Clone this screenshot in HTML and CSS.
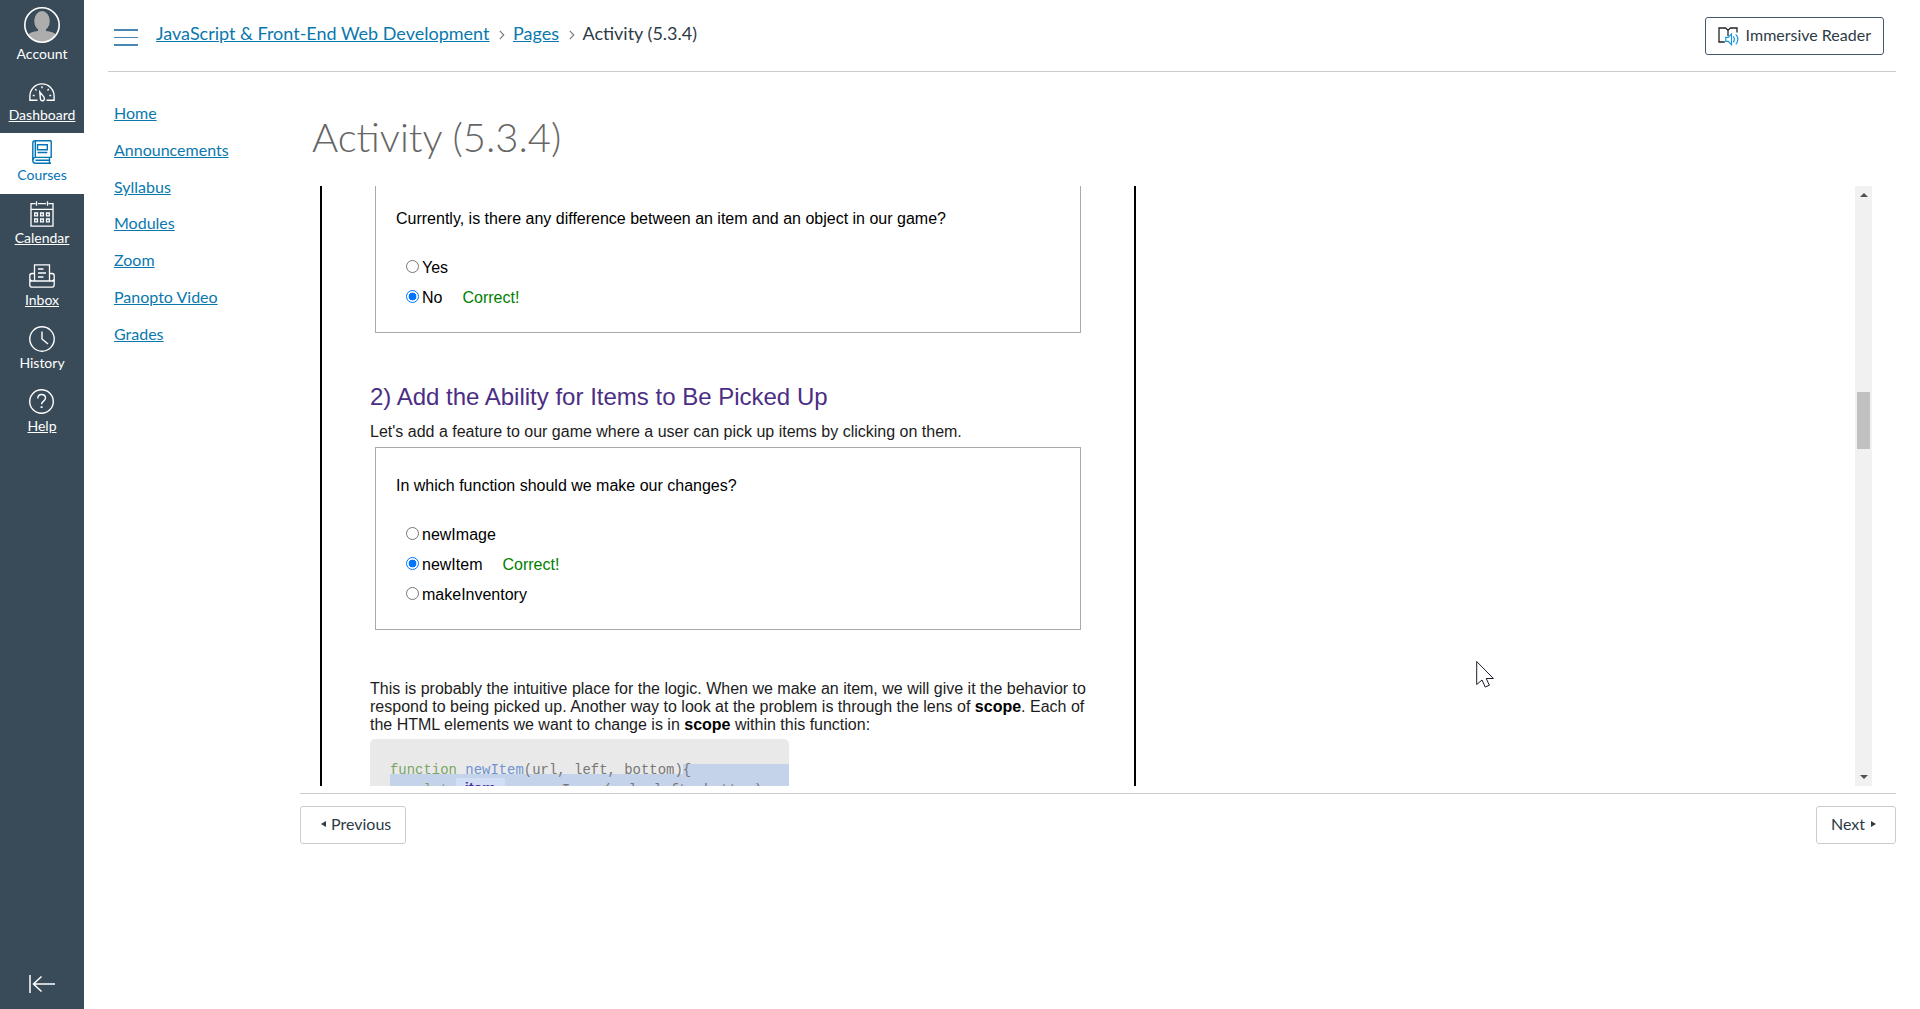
FILE: index.html
```html
<!DOCTYPE html>
<html lang="en">
<head>
<meta charset="utf-8">
<title>Activity (5.3.4)</title>
<link rel="stylesheet" href="styles.css">
</head>
<body>
<div class="app">
  <nav class="rail">
    <a class="rail-item account">
      <span class="rail-icon"><svg width="36" height="36" viewBox="0 0 36 36"><defs><clipPath id="face"><circle cx="18" cy="18" r="17"/></clipPath></defs><circle cx="18" cy="18" r="17" fill="#394b58"/><g clip-path="url(#face)" fill="#adadad"><ellipse cx="18" cy="14" rx="7.8" ry="10"/><path d="M14 20h8v4c5 .6 9 2 12 5v8H2v-8c3-3 7-4.400 12-5z"/></g><circle cx="18" cy="18" r="17.200" fill="none" stroke="#fff" stroke-width="1.600"/></svg></span>
      <span class="rail-label plain">Account</span>
    </a>
    <a class="rail-item dashboard">
      <span class="rail-icon"><svg width="26" height="19" viewBox="0 0 26 19" fill="none" stroke="#fff" stroke-width="1.400"><path d="M8.500 17.300H.9V13a12.100 12.100 0 0 1 24.200 0v4.300h-7.600"/><path d="M10.800 9l3.800 4.600c1.300 1.700.9 3.700-.6 4.100-1.700.4-2.600-.8-2.700-2.500z"/><path d="M13 3.300v2M6.200 6l1.300 1.400M19.800 6l-1.300 1.400M3.800 12.500h1.800M20.400 12.500h1.800"/></svg></span>
      <span class="rail-label">Dashboard</span>
    </a>
    <a class="rail-item courses">
      <span class="rail-icon"><svg width="20" height="24" viewBox="0 0 20 24" fill="none" stroke="#0374b5" stroke-width="1.400"><path d="M19.200.8H3.300C1.800.8.800 1.800.800 3.200v17.300c0 1.700 1 2.700 2.600 2.700H19"/><path d="M3.300.8v16.400M19.200.8v16.600H3.400c-1.600 0-2.500.9-2.500 2.500M17.500 17.500v5.500M3.500 20.200h14"/><path d="M5.500 4.700h9.800v5H5.500zM5.500 12.500h9.800"/></svg></span>
      <span class="rail-label plain">Courses</span>
    </a>
    <a class="rail-item calendar">
      <span class="rail-icon"><svg width="24" height="26" viewBox="0 0 24 26" fill="none" stroke="#fff" stroke-width="1.300"><path d="M5.500 2.700H1v22.500h22V2.700h-4.500M8 2.700h8M1 8.300h22M6.500.3v4.500M17.500.3v4.500"/><path d="M4.700 12h2.800v2.800H4.700zM10.600 12h2.800v2.800h-2.800zM16.500 12h2.800v2.800h-2.800zM4.700 18h2.800v2.800H4.700zM10.600 18h2.800v2.800h-2.800zM16.500 18h2.800v2.800h-2.800z"/></svg></span>
      <span class="rail-label">Calendar</span>
    </a>
    <a class="rail-item inbox">
      <span class="rail-icon"><svg width="26" height="24" viewBox="0 0 26 24" fill="none" stroke="#fff" stroke-width="1.300"><path d="M5.500 16.500V.8h15v15.700M5.500 9.500H3c-1.500 0-2.200.8-2.200 2.200v9c0 1.700.8 2.500 2.400 2.500h19.600c1.600 0 2.400-.8 2.400-2.500v-9c0-1.400-.7-2.200-2.200-2.200h-2.500M.8 15c.3 1.500 1 2 2.500 2h19.400c1.500 0 2.200-.5 2.500-2"/><path d="M9 5h5.500M9 9h8M9 13h5.500"/></svg></span>
      <span class="rail-label">Inbox</span>
    </a>
    <a class="rail-item history">
      <span class="rail-icon"><svg width="26" height="26" viewBox="0 0 26 26" fill="none" stroke="#fff" stroke-width="1.400"><circle cx="13" cy="13" r="12.200"/><path d="M13 5.500V13l6 5"/></svg></span>
      <span class="rail-label plain">History</span>
    </a>
    <a class="rail-item help">
      <span class="rail-icon"><svg width="26" height="26" viewBox="0 0 26 26" fill="none" stroke="#fff" stroke-width="1.400"><circle cx="12.500" cy="12.500" r="11.800"/><path d="M8.800 9.500c0-2.500 1.600-4 3.800-4s3.900 1.400 3.900 3.600c0 3-3.900 3-3.900 6.200"/><path d="M12.600 17.300v1.700" stroke-width="2"/></svg></span>
      <span class="rail-label">Help</span>
    </a>
    <a class="collapse"><svg width="26" height="18" viewBox="0 0 26 18" fill="none" stroke="#fff" stroke-width="1.500"><path d="M1 0v18M26 9H4.500M12.500 1.500L4.500 9l8 7.500"/></svg></a>
  </nav>

  <div class="page">
    <header class="topbar">
      <div class="burger"><i></i><i></i><i></i></div>
      <div class="crumbs">
        <a>JavaScript &amp; Front-End Web Development</a>
        <svg width="6" height="10" viewBox="0 0 6 10"><path d="M.8.8L4.800 5l-4 4.200" fill="none" stroke="#777" stroke-width="1.100"/></svg>
        <a>Pages</a>
        <svg width="6" height="10" viewBox="0 0 6 10"><path d="M.8.8L4.800 5l-4 4.200" fill="none" stroke="#777" stroke-width="1.100"/></svg>
        <span>Activity (5.3.4)</span>
      </div>
      <button class="reader"><svg width="21" height="19" viewBox="0 0 21 19" fill="none"><path d="M6.800 15H1V1h6.500L10 3.200 12.500 1H19v4.500M10 3v6" stroke="#222" stroke-width="1.300"/><path d="M7.800 10.300h2.500l3.200-3.400v10.800l-3.200-3.400H7.800z" stroke="#1a93e0" stroke-width="1.200"/><path d="M15.300 9.300c1.300 1.800 1.300 4.200 0 6M17.800 7.300c2.500 3 2.500 7 0 10" stroke="#1a93e0" stroke-width="1.200"/></svg><span>Immersive Reader</span></button>
    </header>

    <div class="body">
      <nav class="course-nav">
        <a>Home</a><a>Announcements</a><a>Syllabus</a><a>Modules</a><a>Zoom</a><a>Panopto Video</a><a>Grades</a>
      </nav>
      <main class="content">
        <h1>Activity (5.3.4)</h1>
        <section class="frame">
          <article class="lesson">
            <div class="quiz first">
              <p>Currently, is there any difference between an item and an object in our game?</p>
              <label><i class="radio"></i>Yes</label>
              <label><i class="radio on"></i>No<span class="ok">Correct!</span></label>
            </div>
            <h2>2) Add the Ability for Items to Be Picked Up</h2>
            <p class="text">Let's add a feature to our game where a user can pick up items by clicking on them.</p>
            <div class="quiz second">
              <p>In which function should we make our changes?</p>
              <label><i class="radio"></i>newImage</label>
              <label><i class="radio on"></i>newItem<span class="ok">Correct!</span></label>
              <label><i class="radio"></i>makeInventory</label>
            </div>
            <p class="text explain">This is probably the intuitive place for the logic. When we make an item, we will give it the behavior to<br>respond to being picked up. Another way to look at the problem is through the lens of <b>scope</b>. Each of<br>the HTML elements we want to change is in <b>scope</b> within this function:</p>
            <div class="code">
              <div class="line one"><span><span class="kw">function</span> <span class="fn">newItem</span>(url, left, bottom)</span><span class="sel">{</span></div>
              <div class="line two"><span>    <span class="kw">let</span></span><span class="pill">item</span><span> = newImage(url, left, bottom)</span></div>
            </div>
          </article>
          <div class="scroll">
            <i class="up"></i><i class="thumb"></i><i class="down"></i>
          </div>
        </section>
        <footer class="pager">
          <button class="prev"><i></i>Previous</button>
          <button class="next">Next<i></i></button>
        </footer>
      </main>
    </div>
  </div>
</div>
<svg class="cursor" width="20" height="29" viewBox="0 0 20 29"><path d="M.7.500v23l5.300-4.500 3.200 7 4.200-1.800-3.200-6.700h7.200z" fill="#fff" stroke="#1c1c2c" stroke-width="1"/></svg>
</body>
</html>
```
FILE: styles.css
```css
* { box-sizing: border-box; }
body {
  margin: 0;
  background: #fff;
  font: 16px/24px Lato, "Liberation Sans", sans-serif;
  color: #2d3b45;
  overflow: hidden;
}
p, h1, h2 { margin: 0; font-weight: 400; }
svg { display: block; flex: none; }
button {
  display: flex;
  align-items: center;
  height: 38px;
  padding: 0 0 2px;
  border: 1px solid #c7cdd1;
  border-radius: 3px;
  background: #fff;
  font: inherit;
  color: #2d3b45;
}
.app { display: flex; height: 1009px; }

/* global navigation */
.rail {
  width: 84px;
  flex: none;
  display: flex;
  flex-direction: column;
  background: #394b58;
  color: #fff;
}
.rail-item {
  display: flex;
  flex-direction: column;
  align-items: center;
  height: 63px;
  padding-top: 7px;
}
.rail-icon { display: flex; align-items: center; justify-content: center; height: 26px; }
.rail-label { font-size: 14px; line-height: 20px; text-decoration: underline; }
.rail-label.plain { text-decoration: none; }
.account { height: 71px; }
.account .rail-icon { height: 37px; align-items: flex-start; }
.dashboard { height: 62px; }
.dashboard .rail-icon { height: 27px; padding-top: 1px; }
.courses { height: 61px; background: #fff; color: #0374b5; }
.courses .rail-icon { height: 25px; align-items: flex-start; }
.calendar .rail-icon { height: 27px; align-items: flex-start; }
.inbox .rail-icon { align-items: flex-start; }
.history .rail-icon, .help .rail-icon { align-items: flex-start; margin-top: -1px; height: 27px; }
.collapse { margin: auto 0 16px 29px; }

/* page header */
.page { flex: 1; min-width: 0; padding: 0 24px; }
.topbar {
  display: flex;
  align-items: flex-start;
  height: 72px;
  padding: 17px 12px 0 6px;
  border-bottom: 1px solid #c7cdd1;
}
.burger { display: flex; flex-direction: column; gap: 6px; width: 24px; margin: 12px 18px 0 0; }
.burger i { height: 1.500px; background: #4a86b4; }
.crumbs { display: flex; align-items: center; flex: 1; font-size: 18px; line-height: 24px; margin-top: 4px; }
.crumbs a, .course-nav a { color: #0a78ae; text-decoration: underline; }
.crumbs svg { margin: 4px 7.500px 0 10px; }
.reader { border-color: #445a6c; padding: 0 12px; gap: 7px; }
.reader span { padding-bottom: 2px; }

.body { display: flex; }
.course-nav {
  display: flex;
  flex-direction: column;
  align-items: flex-start;
  width: 192px;
  padding: 29px 0 0 6px;
}
.course-nav a { line-height: 24px; margin-bottom: 12.800px; }
.content { flex: 1; min-width: 0; }
h1 { margin: 40px 0 0 12px; font-size: 40px; line-height: 50px; font-weight: 300; color: #666; }

/* embedded lesson */
.frame {
  display: flex;
  justify-content: space-between;
  height: 600px;
  margin: 24px 24px 0 20px;
  overflow: hidden;
}
.lesson {
  width: 816px;
  height: 640px;
  padding: 0 48px;
  border: solid #000;
  border-width: 0 2px;
  font: 16px/18px "Liberation Sans", Arial, sans-serif;
  color: #000;
}
.quiz { margin: 0 5px; border: 1px solid #a9a9a9; padding-left: 20px; }
.quiz.first { height: 147px; border-top: 0; padding-top: 24px; }
.quiz.second { height: 183px; padding-top: 29px; margin-top: 6px; }
.quiz p { margin-bottom: 25px; }
.quiz label { display: flex; align-items: center; height: 30px; padding-left: 10px; }
.radio {
  width: 13px;
  height: 13px;
  margin: 0 3px 4px 0;
  border: 1px solid #767676;
  border-radius: 50%;
}
.radio.on { border-color: #0075ff; background: radial-gradient(circle, #0075ff 3.600px, #fff 4.200px); }
.ok { margin-left: 20px; color: green; }
h2 { margin-top: 50px; font-size: 24px; line-height: 28px; color: #4b2e83; }
.text { margin-top: 12px; color: #1c1c1c; }
.text b { color: #000; }
.explain { margin-top: 50px; }
.code {
  width: 419px;
  height: 90px;
  margin-top: 5px;
  padding: 25px 0 0 20px;
  border-radius: 5px 5px 0 0;
  background: #e9e9e9;
  font: 13.950px/12px "Liberation Mono", "Courier New", monospace;
  color: #777;
}
.line { display: flex; white-space: pre; }
.line.one { height: 10px; }
.line.one .sel { flex: 1; background: #c5d3ea; height: 10px; }
.line.two { height: 40px; background: #c5d3ea; line-height: 32px; }
.kw { color: #7ba566; }
.fn { color: #6d92d3; }
.pill {
  width: 49px;
  height: 30px;
  margin: 4px 7px 0 7px;
  background: #d2def5;
  color: #453398;
  font: bold 15px/20px "Liberation Sans", Arial, sans-serif;
  text-align: center;
}
.scroll {
  width: 17px;
  display: flex;
  flex-direction: column;
  align-items: center;
  background: #f1f1f1;
}
.up, .down { border: 4px solid transparent; }
.up { margin-top: 3px; border-bottom-color: #505050; }
.thumb { width: 13px; height: 57px; margin-top: 195px; background: #c1c1c1; }
.down { margin: auto 0 3px; border-top-color: #505050; }

.pager {
  display: flex;
  justify-content: space-between;
  margin-top: 7px;
  padding-top: 12px;
  border-top: 1px solid #c7cdd1;
}
.pager i { border: 3px solid transparent; }
.prev { width: 106px; padding-left: 17px; }
.prev i { border-right: 5px solid #2d3b45; margin-right: 5px; }
.next { width: 80px; padding-left: 14px; }
.next i { border-left: 5px solid #2d3b45; margin-left: 6px; }

.cursor { position: absolute; left: 1476px; top: 661px; }
```
